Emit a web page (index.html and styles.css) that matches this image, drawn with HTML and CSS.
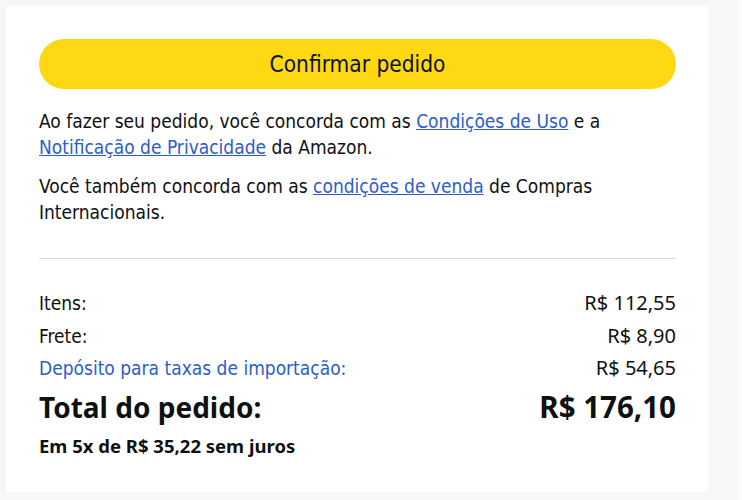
FILE: index.html
```html
<!DOCTYPE html>
<html lang="pt-BR">
<head>
<meta charset="utf-8">
<link rel="stylesheet" href="styles.css">
</head>
<body>
<div class="card">
  <button class="confirm">Confirmar pedido</button>
  <p class="legal">Ao fazer seu pedido, você concorda com as <a href="#">Condições de Uso</a> e a <a href="#">Notificação de Privacidade</a> da Amazon.</p>
  <p class="legal second">Você também concorda com as <a href="#">condições de venda</a> de Compras Internacionais.</p>
  <hr class="divider">
  <div class="row"><span class="label">Itens:</span><span class="value">R$ 112,55</span></div>
  <div class="row"><span class="label">Frete:</span><span class="value">R$ 8,90</span></div>
  <div class="row"><span class="label link">Depósito para taxas de importação:</span><span class="value">R$ 54,65</span></div>
  <div class="row total"><span class="total-label">Total do pedido:</span><span class="total-value">R$ 176,10</span></div>
  <div class="installments">Em 5x de R$ 35,22 sem juros</div>
</div>
<div class="strip"></div>
</body>
</html>
```
FILE: styles.css
```css
html, body { margin: 0; padding: 0; }
body {
  background: #f7f7f7;
  display: flex;
  align-items: flex-start;
  height: 500px;
  font-family: "DejaVu Sans Condensed", "DejaVu Sans", sans-serif;
  color: #0f1111;
}
.card {
  margin: 6px 0 0 6px;
  width: 702px;
  height: 486px;
  box-sizing: border-box;
  background: #fff;
  padding: 33px 32px 0 33px;
}
.strip {
  margin-left: auto;
  width: 5px;
  height: 500px;
  background: #fbfbfb;
}
.confirm {
  display: block;
  width: 100%;
  height: 50px;
  border: 0;
  border-radius: 25px;
  background: #ffd814;
  color: #0f1111;
  font-family: inherit;
  font-size: 22.5px;
  padding: 0;
  cursor: pointer;
}
.legal {
  margin: 19px 0 0;
  font-size: 19px;
  line-height: 26px;
}
.legal.second { margin-top: 13px; }
.legal a { color: #2d5bd0; text-decoration: underline; }
.divider {
  margin: 33px 0 0;
  border: 0;
  height: 1px;
  background: #d5d9d9;
}
.row {
  display: flex;
  justify-content: space-between;
  align-items: baseline;
  font-size: 19px;
  line-height: 32.5px;
}
.divider + .row { margin-top: 28px; }
.value { font-family: "Noto Sans", sans-serif; font-size: 20px; }
.label.link { color: #2d5bd0; }
.row.total {
  margin-top: 5px;
  font-weight: 700;
  line-height: 34px;
}
.total-label { font-family: "Noto Sans", sans-serif; font-size: 28px; }
.total-value { font-family: "Noto Sans", sans-serif; font-size: 29.5px; }
.installments {
  margin-top: 11px;
  font-family: "Noto Sans", sans-serif;
  font-weight: 700;
  font-size: 18.5px;
  line-height: 22px;
}
```
